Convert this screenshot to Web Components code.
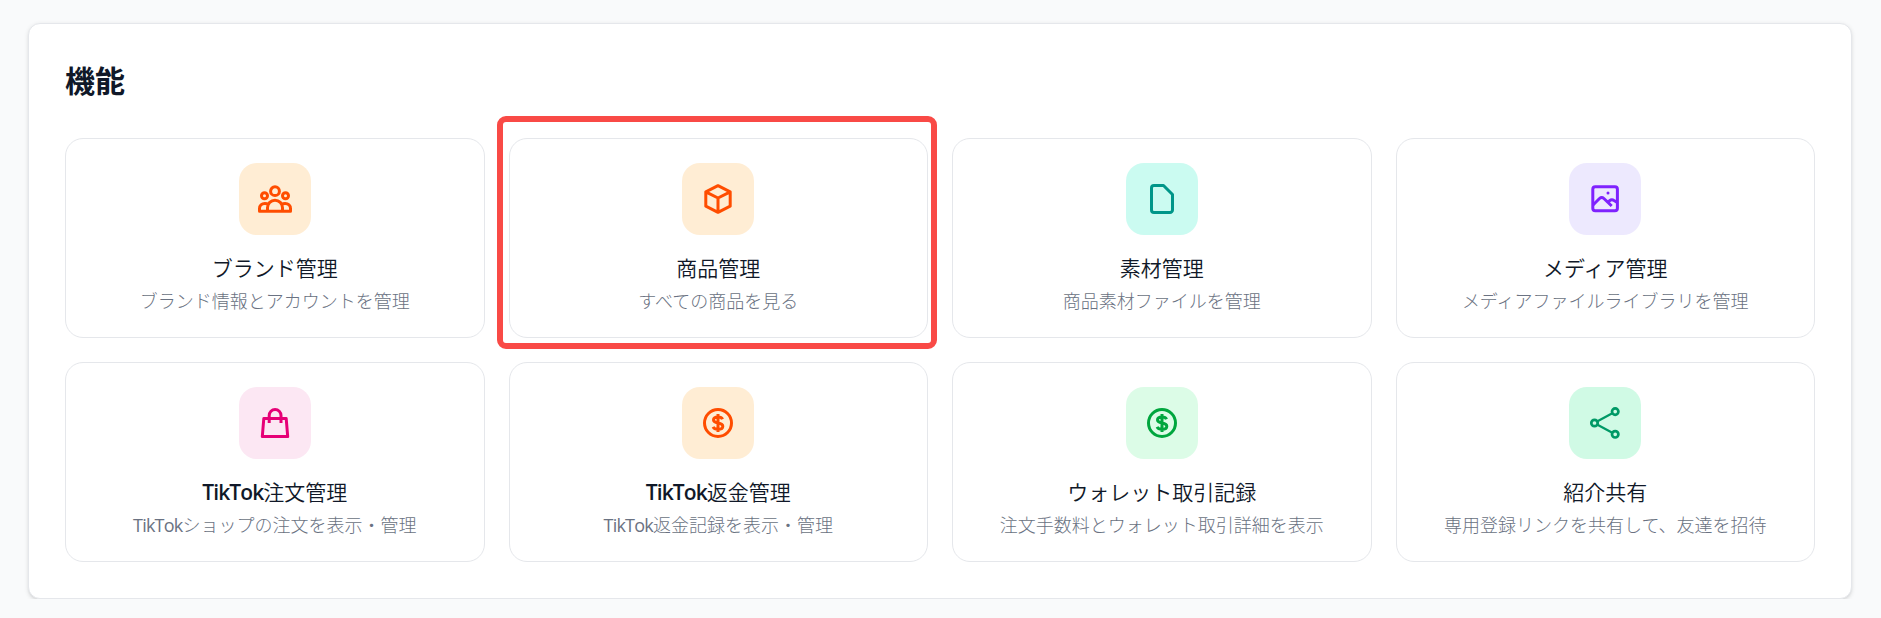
<!DOCTYPE html>
<html lang="ja">
<head>
  <meta charset="utf-8">
  <title>機能</title>
  <style>
    body {
      margin: 0;
      padding: 23px 29px 0 28px;
      background: #f9fafb;
      color: #101828;
      font-family: "Noto Sans", "Noto Sans CJK JP", sans-serif;
    }
  </style>
</head>
<body>
  <template id="feature-panel">
    <style>
      :host {
        display: block;
        box-sizing: border-box;
        height: 576px;
        padding: 36px;
        background: #fff;
        border: 1px solid #e5e7eb;
        border-radius: 12px;
        box-shadow: 0 1.5px 4.5px rgba(0, 0, 0, .1), 0 1.5px 3px -1.5px rgba(0, 0, 0, .1);
      }

      h2 {
        margin: 0 0 40px;
        font: 600 30px/38px "Noto Sans CJK JP", sans-serif;
      }

      .grid {
        display: grid;
        grid-template-columns: repeat(4, 1fr);
        gap: 24px;
      }
    </style>
    <h2><slot name="heading"></slot></h2>
    <div class="grid"><slot></slot></div>
  </template>

  <template id="feature-card">
    <style>
      :host {
        position: relative;
        display: flex;
        flex-direction: column;
        align-items: center;
        box-sizing: border-box;
        height: 200px;
        padding: 24px;
        border: 1px solid #e5e7eb;
        border-radius: 18px;
        white-space: nowrap;
      }

      /* red frame drawn around the picked card */
      :host([marked])::after {
        content: "";
        position: absolute;
        inset: -23px -10px -12px -13px;
        border: 6px solid #f94a46;
        border-radius: 9px;
      }

      .title {
        margin-top: 18px;
        font-size: 21px;
        line-height: 30px;
        font-weight: 350;
      }

      .text {
        margin-top: 6px;
        font-size: 18px;
        line-height: 24px;
        font-weight: 300;
        color: #6a7282;
      }
    </style>
    <slot name="icon"></slot>
    <div class="title"><slot name="title"></slot></div>
    <div class="text"><slot></slot></div>
  </template>

  <template id="feature-icon">
    <style>
      :host {
        display: flex;
        align-items: center;
        justify-content: center;
        width: 72px;
        height: 72px;
        border-radius: 18px;
        background: var(--tint);
        color: var(--ink);
      }

      :host([tone=orange]) { --tint: #ffedd4; --ink: #ff4d00; }
      :host([tone=teal]) { --tint: #cbfbf1; --ink: #009689; }
      :host([tone=violet]) { --tint: #ede9fe; --ink: #7f22fe; }
      :host([tone=pink]) { --tint: #fce7f3; --ink: #e60076; }
      :host([tone=green]) { --tint: #dcfce7; --ink: #00a63e; }
      :host([tone=emerald]) { --tint: #d0fae5; --ink: #009966; }

      svg {
        width: 36px;
        height: 36px;
        fill: none;
        stroke: currentColor;
        stroke-width: 3;
        stroke-linejoin: round;
      }
    </style>
    <svg viewBox="0 0 36 36"></svg>
  </template>

  <!-- no whitespace after the slot: it would show as a gap before the kanji -->
  <template id="latin-text"><style>
      :host {
        font-family: "Open Sans", "Noto Sans", sans-serif;
        font-weight: 400;
        letter-spacing: -.8px;
        line-height: 1;
      }

      :host([bold]) { font-weight: 600; letter-spacing: -.9px; }
    </style><slot></slot></template>

  <feature-panel>
    <span slot="heading">機能</span>
    <feature-card>
      <feature-icon slot="icon" name="team" tone="orange"></feature-icon>
      <span slot="title">ブランド管理</span>ブランド情報とアカウントを管理
    </feature-card>
    <feature-card marked>
      <feature-icon slot="icon" name="box" tone="orange"></feature-icon>
      <span slot="title">商品管理</span>すべての商品を見る
    </feature-card>
    <feature-card>
      <feature-icon slot="icon" name="file" tone="teal"></feature-icon>
      <span slot="title">素材管理</span>商品素材ファイルを管理
    </feature-card>
    <feature-card>
      <feature-icon slot="icon" name="image" tone="violet"></feature-icon>
      <span slot="title">メディア管理</span>メディアファイルライブラリを管理
    </feature-card>
    <feature-card>
      <feature-icon slot="icon" name="bag" tone="pink"></feature-icon>
      <span slot="title"><latin-text bold>TikTok</latin-text>注文管理</span><latin-text>TikTok</latin-text>ショップの注文を表示・管理
    </feature-card>
    <feature-card>
      <feature-icon slot="icon" name="dollar" tone="orange"></feature-icon>
      <span slot="title"><latin-text bold>TikTok</latin-text>返金管理</span><latin-text>TikTok</latin-text>返金記録を表示・管理
    </feature-card>
    <feature-card>
      <feature-icon slot="icon" name="dollar" tone="green"></feature-icon>
      <span slot="title">ウォレット取引記録</span>注文手数料とウォレット取引詳細を表示
    </feature-card>
    <feature-card>
      <feature-icon slot="icon" name="share" tone="emerald"></feature-icon>
      <span slot="title">紹介共有</span>専用登録リンクを共有して、友達を招待
    </feature-card>
  </feature-panel>
</body>
<script>
  const icons = {
    team: '<circle cx="18" cy="10.2" r="4.4"/><circle cx="7.5" cy="14.8" r="3"/><circle cx="28.5" cy="14.8" r="3"/>' +
      '<path d="M10.5 30.2v-3.5a7.5 7.5 0 0 1 15 0v3.5M11.5 23.3c-1-.6-2.3-.8-3.6-.8-3.2 0-5.4 2-5.4 5v2.7h31v-2.7c0-3-2.2-5-5.4-5-1.3 0-2.6.2-3.6.8"/>',
    box: '<path d="M18 4.7l12.2 6.1v14.4L18 31.3 5.8 25.2V10.8zM5.8 10.8L18 17l12.2-6.2M18 17v14"/>',
    file: '<path d="M10 4.5h9.5L28.5 13.5v15.5a2.5 2.5 0 0 1-2.5 2.5H10a2.5 2.5 0 0 1-2.5-2.5V7A2.5 2.5 0 0 1 10 4.5z"/>',
    image: '<rect x="5.8" y="5.8" width="24.6" height="24" rx="2.5"/><path d="M6 24l6.5-6.5q2.2-2 4.4 0l7.8 7.5M20.8 21.3l1.7-1.5q2.3-1.8 4.5-.3l3.3 2"/><circle cx="21" cy="12" r="1.5" fill="currentColor" stroke="none"/>',
    bag: '<path d="M6.8 13.5h22.4L30.7 31.5H5.3zM12.2 18v-7.5a5.9 6 0 0 1 11.8 0V18"/>',
    dollar: '<circle cx="18" cy="18" r="13.5"/><path d="M22.5 14.2c-.6-1.5-2.2-2.2-4.5-2.2-2.8 0-4.5 1.1-4.5 3 0 4.2 9.3 1.9 9.3 6.2 0 1.9-1.9 3-4.8 3-2.5 0-4.2-.9-4.9-2.4M18 9v18"/>',
    share: '<g stroke-width="2.7"><circle cx="7.5" cy="18" r="3.2"/><circle cx="28.2" cy="6.6" r="3.2"/><circle cx="28.2" cy="29.3" r="3.2"/></g><path stroke-width="2.2" d="M10.5 16.3L25.3 8.2M10.5 19.7l14.8 8.1"/>'
  };

  function define(name, setup) {
    customElements.define(name, class extends HTMLElement {
      constructor() {
        super();
        const template = document.getElementById(name);
        this.attachShadow({mode: 'open'}).appendChild(template.content.cloneNode(true));
        if (setup) {
          setup(this);
        }
      }
    });
  }

  define('feature-panel');
  define('feature-card');
  define('latin-text');
  define('feature-icon', el => {
    el.shadowRoot.querySelector('svg').innerHTML = icons[el.getAttribute('name')];
  });
</script>
</html>
